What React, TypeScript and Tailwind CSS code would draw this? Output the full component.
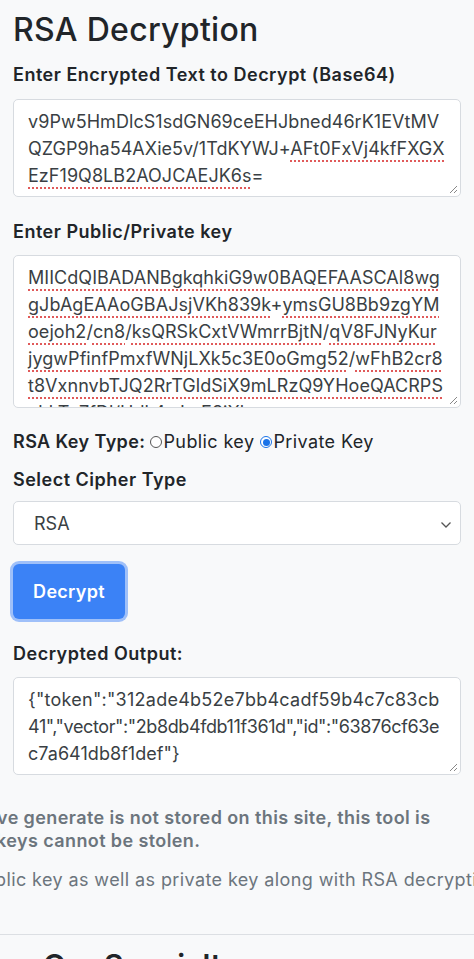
import React from "react";

const U = ({ children }: { children: React.ReactNode }) => (
  <span className="underline decoration-dotted decoration-[#e05a5a] decoration-2 underline-offset-[5px]">
    {children}
  </span>
);

const Resize = () => (
  <svg className="absolute right-[2px] bottom-[2px]" width="10" height="10" viewBox="0 0 10 10">
    <line x1="9" y1="2" x2="2" y2="9" stroke="#888" strokeWidth="1" />
    <line x1="9" y1="6" x2="6" y2="9" stroke="#888" strokeWidth="1" />
  </svg>
);

const Box = ({ h, children }: { h: string; children: React.ReactNode }) => (
  <div
    className={`relative ${h} overflow-hidden rounded-[5px] border border-[#d7dbe0] bg-white pl-[14px] pt-[8px] text-[18px] leading-[27px] tracking-[0.05px] text-[#3a3f44]`}
  >
    {children}
    <Resize />
  </div>
);

const Line = ({ children, cls = "" }: { children: React.ReactNode; cls?: string }) => (
  <div className={`whitespace-nowrap ${cls}`}>{children}</div>
);

export default function App() {
  return (
    <div
      className="min-h-screen overflow-hidden bg-[#f8f9fa] text-[#212529]"
      style={{ fontFamily: "Inter, 'Noto Sans', sans-serif" }}
    >
      <div className="px-[13px]">
        <h1 className="pt-[11px] text-[32px] font-medium leading-[38px] tracking-[0.3px] text-[#212529]">
          RSA Decryption
        </h1>

        <div className="mt-[14px] mb-[12px] h-[24px] text-[18px] font-semibold leading-[24px] tracking-[0.5px]">
          Enter Encrypted Text to Decrypt (Base64)
        </div>
        <Box h="h-[98px]">
          <Line>v9Pw5HmDlcS1sdGN69ceEHJbned46rK1EVtMV</Line>
          <Line>
            QZGP9ha54AXie5v/1TdKYWJ+<U>AFt0FxVj4kfFXGX</U>
          </Line>
          <Line>
            <U>EzF19Q8LB2AOJCAEJK6s</U>=
          </Line>
        </Box>

        <div className="mt-[23px] mb-[11px] h-[24px] text-[18px] font-semibold leading-[24px] tracking-[0.5px]">
          Enter Public/Private key
        </div>
        <Box h="h-[153px]">
          <Line>
            <U>MIICdQIBADANBgkqhkiG9w0BAQEFAASCAl8wg</U>
          </Line>
          <Line>
            <U>gJbAgEAAoGBAJsjVKh839k</U>+<U>ymsGU8Bb9zgYM</U>
          </Line>
          <Line>
            <U>oejoh2</U>/<U>cn8</U>/<U>ksQRSkCxtVWmrrBjtN</U>/<U>qV8FJNyKur</U>
          </Line>
          <Line>
            <U>jygwPfinfPmxfWNjLXk5c3E0oGmg52</U>/<U>wFhB2cr8</U>
          </Line>
          <Line>
            <U>t8VxnnvbTJQ2RrTGldSiX9mLRzQ9YHoeQACRPS</U>
          </Line>
          <Line>
            <U>ahkTq7fDl/Hdk4wLuE8jXl</U>
          </Line>
        </Box>

        <div className="mt-[22px] flex h-[24px] items-center text-[18px] leading-[24px] tracking-[0.4px]">
          <span className="font-semibold">RSA Key Type:</span>
          <span className="ml-[5px] mr-[1px] inline-block h-[12px] w-[12px] rounded-full border border-[#555] bg-white" />
          <span>Public key</span>
          <span className="ml-[6px] mr-[1px] flex h-[12px] w-[12px] items-center justify-center rounded-full border-[1.5px] border-[#1a73e8] bg-white">
            <span className="h-[7px] w-[7px] rounded-full bg-[#1a73e8]" />
          </span>
          <span>Private Key</span>
        </div>

        <div className="mt-[14px] mb-[9px] h-[24px] text-[18px] font-semibold leading-[24px] tracking-[0.5px]">
          Select Cipher Type
        </div>
        <div className="relative flex h-[44px] items-center rounded-[5px] border border-[#d7dbe0] bg-white pl-[20px] text-[18px] text-[#3a3f44]">
          RSA
          <svg className="absolute right-[8px] top-[19px]" width="12" height="8" viewBox="0 0 12 8">
            <path d="M1.5 1.5 L6 6 L10.5 1.5" fill="none" stroke="#555" strokeWidth="1.3" />
          </svg>
        </div>

        <button className="mt-[19px] flex h-[55px] w-[112px] items-center justify-center rounded-[6px] bg-[#3b82f6] text-[18px] font-semibold tracking-[0.3px] text-white ring-[3px] ring-[#9fc0f9]">
          Decrypt
        </button>

        <div className="mt-[23px] mb-[11px] h-[24px] text-[18px] font-semibold leading-[24px] tracking-[0.5px]">
          Decrypted Output:
        </div>
        <Box h="h-[98px]">
          <Line cls="tracking-[0.25px]">{'{"token":"312ade4b52e7bb4cadf59b4c7c83cb'}</Line>
          <Line cls="tracking-[-0.4px]">{'41","vector":"2b8db4fdb11f361d","id":"63876cf63e'}</Line>
          <Line>{'c7a641db8f1def"}'}</Line>
        </Box>
      </div>

      <div className="mt-[31px] text-[18px] leading-[23px] tracking-[0.4px] text-[#6c757d]">
        <div className="ml-[-3px] whitespace-nowrap font-semibold">ve generate is not stored on this site, this tool is</div>
        <div className="ml-[-4px] whitespace-nowrap font-semibold">keys cannot be stolen.</div>
        <div className="ml-[-5px] mt-[16px] whitespace-nowrap">blic key as well as private key along with RSA decryption</div>
      </div>

      <div className="mt-[43px] border-t border-[#dcdfe3]" />
      <h2 className="ml-[43px] mt-[12px] text-[30px] font-semibold leading-[36px] text-[#212529]">Our Specialty</h2>
    </div>
  );
}
